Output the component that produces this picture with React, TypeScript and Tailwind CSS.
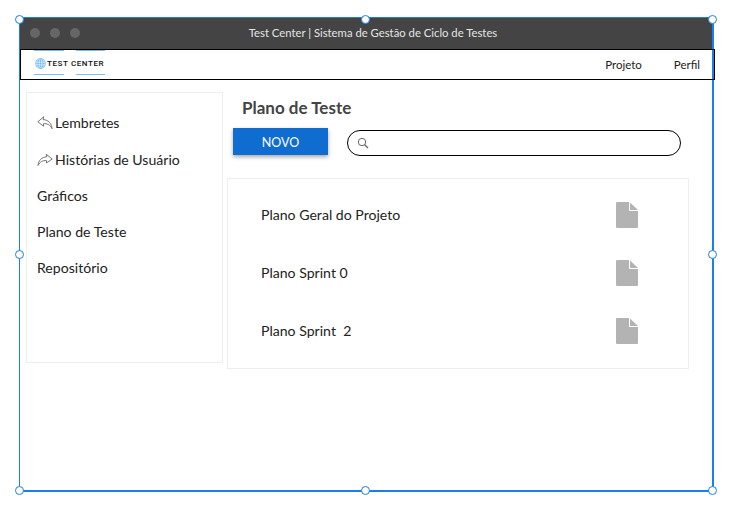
import React from "react";

const font = { fontFamily: 'Lato, "Noto Sans", sans-serif' };

function Handle({ className }: { className: string }) {
  return <div className={"absolute w-[9px] h-[9px] rounded-full bg-white border border-[#1a7fe8] " + className} />;
}

function Globe() {
  return (
    <svg width="11" height="11" viewBox="0 0 11 11" fill="none" stroke="#7dbdf0" strokeWidth="0.7">
      <circle cx="5.5" cy="5.5" r="5" fill="#d8ebfa" />
      <ellipse cx="5.5" cy="5.5" rx="2.4" ry="5" />
      <path d="M5.5 .5v10M.5 5.5h10M1.2 3h8.6M1.2 8h8.6" />
    </svg>
  );
}

function DocIcon() {
  return (
    <svg width="22" height="26" viewBox="0 0 22 26">
      <path d="M0 1a1 1 0 0 1 1-1h12v8a1 1 0 0 0 1 1h8v16a1 1 0 0 1-1 1H1a1 1 0 0 1-1-1z" fill="#b2b3b2" />
      <path d="M14 0.5 22 8h-8z" fill="#b2b3b2" />
    </svg>
  );
}

function BackArrow() {
  return (
    <svg width="16" height="14" viewBox="0 0 16 14" fill="none" stroke="#666" strokeWidth="0.9" strokeLinejoin="round" strokeLinecap="round">
      <path d="M6.500 1 .8 5.800l5.700 4.400V7.700c3.500-.3 6.700 1 8.500 5-.3-5.300-3.500-8.700-8.500-9.100z" />
    </svg>
  );
}

function ForwardArrow() {
  return (
    <svg width="16" height="14" viewBox="0 0 16 14" fill="none" stroke="#666" strokeWidth="0.9" strokeLinejoin="round" strokeLinecap="round">
      <path d="M9.500 1.500 15.200 6 9.500 10V7.600C6 7.300 3 8.600 1 12.500 1.400 7.500 4.500 4.200 9.500 3.800z" />
    </svg>
  );
}

const side: { label: string; icon?: React.ReactNode; h: string }[] = [
  { label: "Lembretes", icon: <BackArrow />, h: "h-[37px]" },
  { label: "Histórias de Usuário", icon: <ForwardArrow />, h: "h-[37px]" },
  { label: "Gráficos", h: "h-[36px]" },
  { label: "Plano de Teste", h: "h-[36px]" },
  { label: "Repositório", h: "h-[36px]" },
];

const plans = ["Plano Geral do Projeto", "Plano Sprint 0", "Plano Sprint  2"];

export default function App() {
  return (
    <div className="relative w-[737px] h-[519px] bg-white overflow-hidden pl-[19px] pt-[17px]" style={font}>
      <div className="relative w-[695px] h-[475px] border border-[#1a7fe8] border-r-2 border-b-2">
        <div className="relative flex items-center justify-center h-[31px] pl-[14px] bg-[#444444] text-[11.300px] text-[#e4e4e4]">
          <div className="absolute left-[10px] top-[10px] flex gap-[10px]">
            <div className="w-[10px] h-[10px] rounded-full bg-[#666666]" />
            <div className="w-[10px] h-[10px] rounded-full bg-[#666666]" />
            <div className="w-[10px] h-[10px] rounded-full bg-[#666666]" />
          </div>
          Test Center | Sistema de Gestão de Ciclo de Testes
        </div>

        <div className="relative flex items-center justify-between w-[695px] h-[31px] border border-black pl-[14px] pr-[14px] text-[11.500px] text-[#222222]">
          <div className="absolute left-[13px] top-0 w-[30px] h-[1px] bg-[#7dbdf0]" />
          <div className="absolute left-[55px] top-0 w-[29px] h-[1px] bg-[#7dbdf0]" />
          <div className="absolute left-[13px] top-[24px] w-[30px] h-[1px] bg-[#7dbdf0]" />
          <div className="absolute left-[55px] top-[24px] w-[29px] h-[1px] bg-[#7dbdf0]" />
          <div className="flex items-center -mt-[2px]">
            <Globe />
            <span className="text-[8px] font-medium tracking-[0.6px] text-[#111111] ml-[1px]" style={{ fontFamily: 'Roboto, sans-serif' }}>
              TEST CENTER
            </span>
          </div>
          <div className="flex gap-[32px]">
            <span>Projeto</span>
            <span>Perfil</span>
          </div>
        </div>

        <div className="flex pl-[6px] pt-[12px]">
          <div className="w-[197px] h-[271px] border border-[#eeeeee] pl-[10px] pt-[11px] text-[14.100px] text-[#222222] shrink-0">
            {side.map((s) => (
              <div key={s.label} className={"flex items-center " + s.h}>
                {s.icon && <span className="w-[18px] shrink-0">{s.icon}</span>}
                {s.label}
              </div>
            ))}
          </div>
          <div className="flex flex-col">
            <div className="pl-[19px] pt-[5px] h-[36px] text-[17px] font-bold text-[#444444] leading-[22px]">Plano de Teste</div>
            <div className="flex items-start pl-[10px]">
              <button className="w-[95px] h-[27px] pt-[3px] bg-[#0f6cd0] text-white text-[12.500px] shadow-[0_2px_4px_rgba(0,0,0,0.35)]">NOVO</button>
              <div className="flex items-center w-[334px] h-[26px] ml-[19px] mt-[2px] border border-black rounded-full pl-[9px]">
                <svg width="12" height="12" viewBox="0 0 12 12" fill="none" stroke="#666" strokeWidth="1">
                  <circle cx="5" cy="5" r="3.700" />
                  <path d="M7.700 7.700 11 11" strokeWidth="1.300" />
                </svg>
              </div>
            </div>
            <div className="w-[462px] h-[191px] ml-[4px] mt-[22px] border border-[#eeeeee] py-[7px] pl-[33px] pr-[50px] text-[14.100px] text-[#222222]">
              {plans.map((p) => (
                <div key={p} className="flex items-center justify-between h-[58px]">
                  <span className="whitespace-pre">{p}</span>
                  <DocIcon />
                </div>
              ))}
            </div>
          </div>
        </div>

        <Handle className="-left-[5px] -top-[3px]" />
        <Handle className="left-[341px] -top-[3px]" />
        <Handle className="-right-[5px] -top-[3px]" />
        <Handle className="-left-[5px] top-[232px]" />
        <Handle className="-right-[5px] top-[232px]" />
        <Handle className="-left-[5px] -bottom-[5px]" />
        <Handle className="left-[341px] -bottom-[5px]" />
        <Handle className="-right-[5px] -bottom-[5px]" />
      </div>
    </div>
  );
}
